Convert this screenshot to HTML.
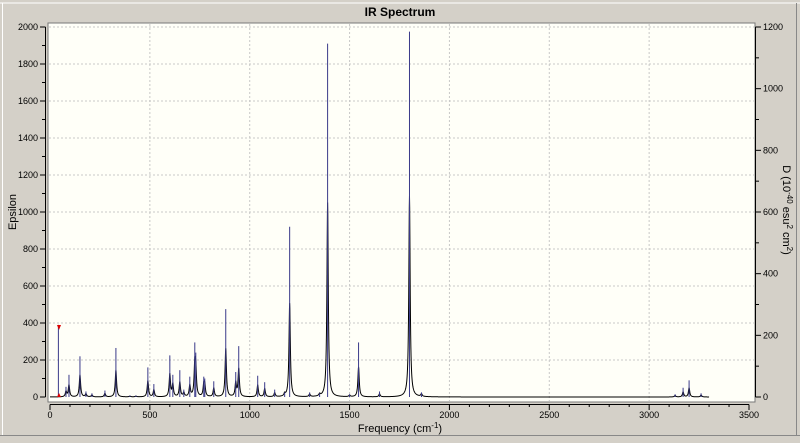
<!DOCTYPE html>
<html><head><meta charset="utf-8"><style>
body{margin:0;background:#d4d0c8;width:800px;height:438px;overflow:hidden;font-family:"Liberation Sans",sans-serif}
</style></head><body>
<svg id="s" width="800" height="438" xmlns="http://www.w3.org/2000/svg" font-family="Liberation Sans, sans-serif">
<rect x="0" y="0" width="800" height="438" fill="#d4d0c8"/>
<line x1="0" y1="3" x2="800" y2="3" fill="none" stroke="#fff" stroke-width="1"/>
<line x1="0" y1="435.5" x2="800" y2="435.5" stroke="#888"/>
<line x1="2.5" y1="3" x2="2.5" y2="435" stroke="#fff"/>
<line x1="796.5" y1="3" x2="796.5" y2="435" stroke="#888"/>
<rect x="48" y="23" width="707" height="379" fill="#fffff8" stroke="#777"/>
<g id="grid" stroke="#c8c8c8" stroke-dasharray="2,2" stroke-width="1"></g>
<g id="axes" stroke="#000" stroke-width="1" font-size="9" fill="#000"></g>
<path id="curve" fill="none" stroke="#000" stroke-width="1"/>
<g id="sticks" stroke="#3a3a8a" stroke-width="1"></g>
<polygon points="57,325 61,325 59,330" fill="#d00"/>
<polygon points="57,397 61,397 59,393" fill="#d00"/>
<text x="400" y="16" text-anchor="middle" font-weight="bold" font-size="12">IR Spectrum</text>
<text x="400" y="432" text-anchor="middle" font-size="11">Frequency (cm<tspan dy="-4" font-size="8">-1</tspan><tspan dy="4">)</tspan></text>
<text transform="translate(16,212) rotate(-90)" text-anchor="middle" font-size="11">Epsilon</text>
<text transform="translate(783,210) rotate(90)" text-anchor="middle" font-size="11">D (10<tspan dy="-4" font-size="8">-40</tspan><tspan dy="4"> esu</tspan><tspan dy="-4" font-size="8">2</tspan><tspan dy="4"> cm</tspan><tspan dy="-4" font-size="8">2</tspan><tspan dy="4">)</tspan></text>
</svg>
<script>
var NS="http://www.w3.org/2000/svg";
function X(f){return 50+f*699/3500}
function Y(e){return 397-e*370/2000}
function el(p,t,a,txt){var e=document.createElementNS(NS,t);for(var k in a)e.setAttribute(k,a[k]);if(txt!=null)e.textContent=txt;p.appendChild(e);return e}
var g=document.getElementById('grid'),ax=document.getElementById('axes');
for(var f=500;f<3500;f+=500)el(g,'line',{x1:X(f),x2:X(f),y1:24,y2:401});
for(var e=200;e<=2000;e+=200)el(g,'line',{x1:49,x2:754,y1:Y(e),y2:Y(e)});
el(ax,'line',{x1:45.5,x2:45.5,y1:Y(2000),y2:Y(0)});
for(var e=0;e<=2000;e+=100){el(ax,'line',{x1:e%200?42:40,x2:45.5,y1:Y(e),y2:Y(e)});}
for(var e=0;e<=2000;e+=200)el(ax,'text',{x:38,y:Y(e)+3,'text-anchor':'end',stroke:'none'},e);
el(ax,'line',{x1:755.5,x2:755.5,y1:Y(2000),y2:Y(0)});
for(var d=0;d<=1200;d+=100){var y=397-d*370/1200;el(ax,'line',{x1:755.5,x2:d%200?759:761,y1:y,y2:y});}
for(var d=0;d<=1200;d+=200){var y=397-d*370/1200;el(ax,'text',{x:763,y:y+3,stroke:'none'},d);}
el(ax,'line',{x1:X(0),x2:X(3500),y1:404.5,y2:404.5});
for(var f=0;f<=3500;f+=100)el(ax,'line',{x1:X(f),x2:X(f),y1:404.5,y2:f%500?407:410});
for(var f=0;f<=3500;f+=500)el(ax,'text',{x:X(f),y:418,'text-anchor':'middle',stroke:'none'},f);
var P=[[42,390],[80,55],[95,120],[150,220],[180,30],[210,20],[275,35],[330,265],[400,8],[430,8],[490,160],[520,70],[600,225],[615,120],[650,145],[670,40],[700,110],[725,295],[730,240],[770,110],[775,100],[820,85],[880,475],[930,135],[945,275],[1040,115],[1075,80],[1125,40],[1175,25],[1200,920],[1300,25],[1350,20],[1390,1910],[1500,15],[1545,295],[1650,30],[1800,1975],[1860,25],[3130,15],[3170,50],[3200,90],[3260,20]];
var s=document.getElementById('sticks');
P.forEach(function(p){el(s,'line',{x1:X(p[0]),x2:X(p[0]),y1:Y(0),y2:Y(p[1])})});
var d="",w=4;
for(var f=0;f<=3300;f+=1){var v=0;P.forEach(function(p){if(p[0]==42)return;var q=(f-p[0])/w;v+=p[1]*0.55/(1+q*q)});
d+=(f?"L":"M")+X(f).toFixed(2)+","+Y(v).toFixed(2);}
document.getElementById('curve').setAttribute('d',d);
</script>
</body></html>
